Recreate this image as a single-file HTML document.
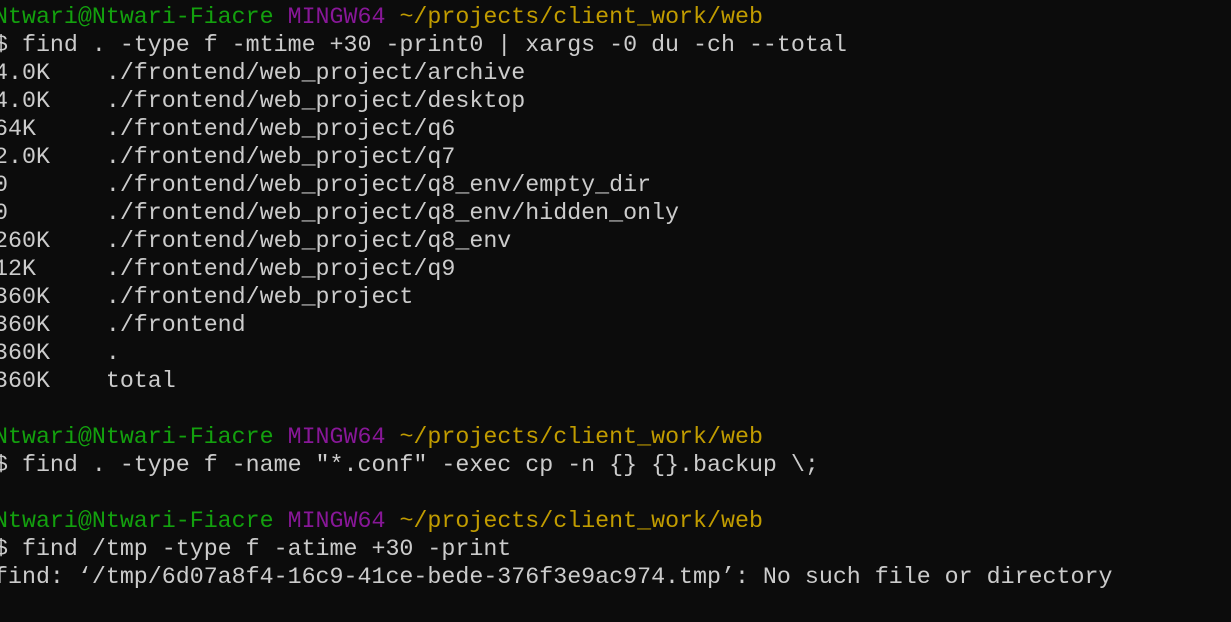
<!DOCTYPE html>
<html><head><meta charset="utf-8"><style>
html,body{margin:0;padding:0;background:#0c0c0c;width:1231px;height:622px;overflow:hidden}
pre{margin:0;position:absolute;left:-6px;top:3px;font-family:"Liberation Mono",monospace;font-size:23.3px;line-height:28px;color:#cccccc;white-space:pre}
.g{color:#13a10e}.p{color:#881798}.y{color:#c19c00}
</style></head><body><pre><span class="g">Ntwari@Ntwari-Fiacre</span> <span class="p">MINGW64</span> <span class="y">~/projects/client_work/web</span>
$ find . -type f -mtime +30 -print0 | xargs -0 du -ch --total
4.0K    ./frontend/web_project/archive
4.0K    ./frontend/web_project/desktop
64K     ./frontend/web_project/q6
2.0K    ./frontend/web_project/q7
0       ./frontend/web_project/q8_env/empty_dir
0       ./frontend/web_project/q8_env/hidden_only
260K    ./frontend/web_project/q8_env
12K     ./frontend/web_project/q9
360K    ./frontend/web_project
360K    ./frontend
360K    .
360K    total

<span class="g">Ntwari@Ntwari-Fiacre</span> <span class="p">MINGW64</span> <span class="y">~/projects/client_work/web</span>
$ find . -type f -name "*.conf" -exec cp -n {} {}.backup \;

<span class="g">Ntwari@Ntwari-Fiacre</span> <span class="p">MINGW64</span> <span class="y">~/projects/client_work/web</span>
$ find /tmp -type f -atime +30 -print
find: ‘/tmp/6d07a8f4-16c9-41ce-bede-376f3e9ac974.tmp’: No such file or directory
</pre></body></html>
